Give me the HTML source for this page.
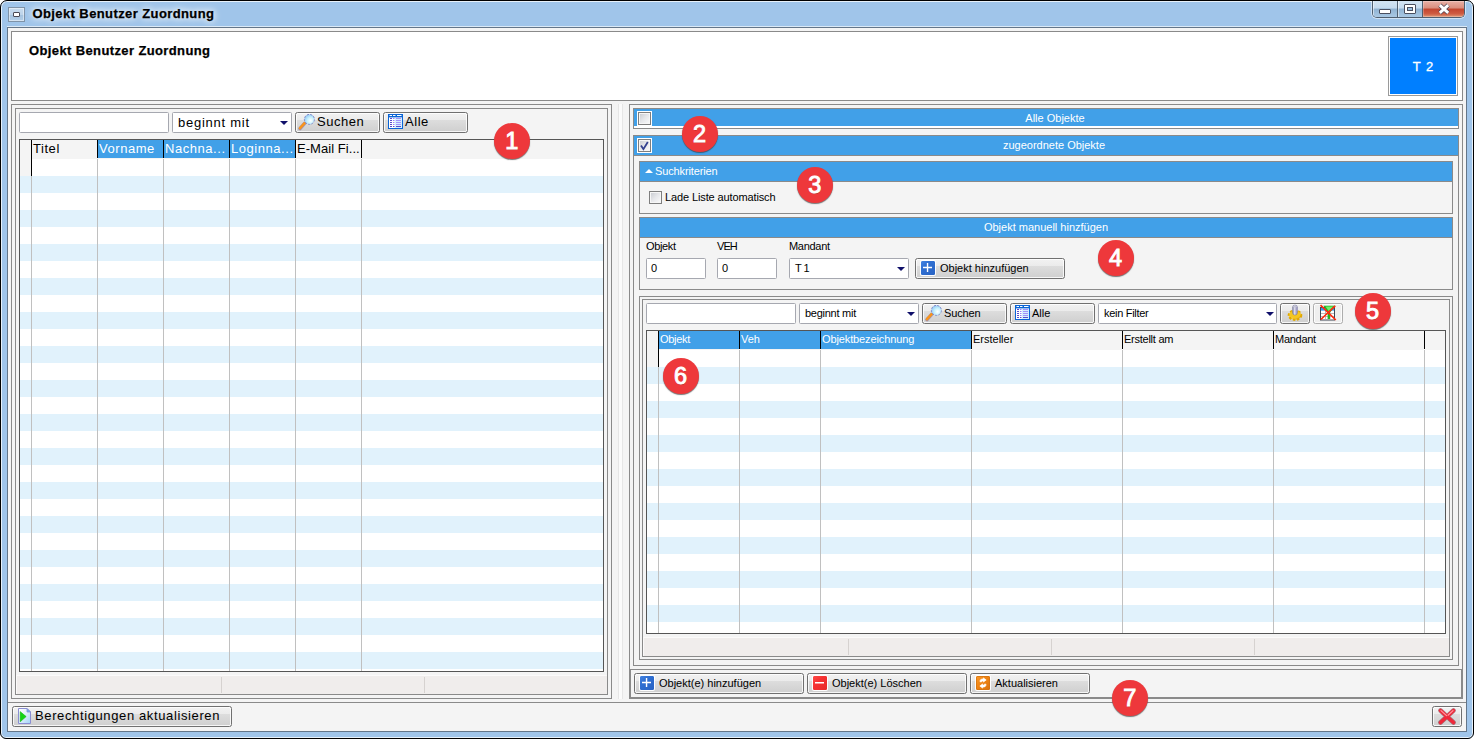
<!DOCTYPE html>
<html>
<head>
<meta charset="utf-8">
<title>Objekt Benutzer Zuordnung</title>
<style>
*{box-sizing:border-box;margin:0;padding:0}
html,body{width:1474px;height:739px;overflow:hidden;background:#fff}
body{font-family:"Liberation Sans",sans-serif;font-size:11px;color:#000;position:relative}
.a{position:absolute}
.win{left:0;top:0;width:1474px;height:739px;background:#a0c5ea;border:1px solid #000;border-radius:7px 7px 6px 6px;box-shadow:inset 0 0 0 1px rgba(255,255,255,.75)}
.client{left:7px;top:27px;width:1460px;height:705px;background:#f4f4f4;border:1px solid #647689;box-shadow:0 -1px 0 rgba(228,238,248,.85)}
.pn{border:1px solid #8a8a8a;background:#f4f4f4}
.bar{background:#41a0e8;box-shadow:0 1px 0 #8a8a8a;color:#fff;font-size:11px;line-height:19px;white-space:nowrap}
.inp{background:#fff;border:1px solid #a6a8b0;border-radius:1.5px;height:21px}
.btn{height:21px;border:1px solid #707070;border-radius:2.5px;background:linear-gradient(#f2f2f2 0,#ebebeb 37%,#dddddd 38%,#cfcfcf 100%);box-shadow:inset 0 0 0 1px rgba(255,255,255,.8);white-space:nowrap}
.arr{width:0;height:0;border-left:4px solid transparent;border-right:4px solid transparent;border-top:4px solid #10106a}
.t{white-space:nowrap;line-height:1}
.v{font-size:13px;letter-spacing:.55px}
.grid{border:1px solid #555;background:#fff;overflow:hidden}
.stripes{left:0;right:0;background:repeating-linear-gradient(#fff 0,#fff 17px,#e1f2fc 17px,#e1f2fc 34px)}
.vl{width:1px;background:#c0c0c0;top:19px;bottom:0}
.hl{width:1px;background:#000;top:0}
.hd{background:#f4f4f4;top:0}
.hb{background:#41a0e8;color:#fff;top:0}
.st{background:#f0edec;border-left:1px solid #fbfafa;border-top:1px solid #fbfafa}
.sv{width:1px;background:#d6d2d0;top:1px;bottom:1px}
.cb{width:13px;height:13px;border:1px solid #7e7e7e;background:linear-gradient(135deg,#c6c9cf 0,#e6e7ea 50%,#fbfbfb 100%);box-shadow:inset 0 0 0 1px #f6f6f6}
.cbw{box-shadow:0 0 0 1px #fff,inset 0 0 0 1px #f6f6f6}
.dot{width:36px;height:36px;border-radius:50%;background:#ee383b;color:#fff;font-weight:normal;font-size:23.5px;line-height:37px;text-align:center;-webkit-text-stroke:.95px #fff;text-shadow:0 1px 0 rgba(110,20,20,.45);box-shadow:0 1px 1px rgba(60,60,60,.7)}
.ic{width:14px;height:14px;box-shadow:0 0 0 1px rgba(255,255,255,.95);border-radius:1px}
</style>
</head>
<body>
<div class="a win"></div>
<!-- title bar -->
<div class="a" style="left:8px;top:7px;width:17px;height:15px;border:1px solid #7f93a8;background:linear-gradient(#c9dcee 0,#bdd4ea 50%,#a4c2df 51%,#b4cfe8 100%);box-shadow:inset 0 0 0 1px rgba(255,255,255,.45)"></div>
<div class="a" style="left:13px;top:12px;width:7px;height:5px;border:1px solid #4a4a55;border-radius:1px;background:#fff"></div>
<div class="a t" id="wtitle" style="left:32.500px;top:7px;font-size:13px;font-weight:bold;letter-spacing:.4px;-webkit-text-stroke:.25px #000;text-shadow:0 0 6px #fff,0 0 8px #fff">Objekt Benutzer Zuordnung</div>

<div class="a client"></div>

<!-- header panel -->
<div class="a pn" style="left:11px;top:31px;width:1452px;height:70px;background:#fff"></div>
<div class="a t" id="htitle" style="left:29px;top:44px;font-size:13px;font-weight:bold;letter-spacing:.38px;-webkit-text-stroke:.25px #000">Objekt Benutzer Zuordnung</div>
<div class="a" style="left:1388px;top:36px;width:70px;height:60px;border:1px solid #9a9a9a;background:#fff;padding:1px"><div style="width:100%;height:100%;background:#007fff;color:#fff;font-size:13px;text-align:center;line-height:57px;letter-spacing:1px;padding-left:1px;-webkit-text-stroke:.3px #fff">T 2</div></div>

<!-- left panel -->
<div class="a pn" style="left:11px;top:104px;width:601px;height:595px"></div>
<div class="a pn" style="left:15px;top:108px;width:593px;height:587px"></div>

<div class="a inp" style="left:19px;top:112px;width:150px"></div>
<div class="a inp" style="left:172px;top:112px;width:120px"></div>
<div class="a t v" id="lcombo" style="left:178px;top:116px;letter-spacing:.75px">beginnt mit</div>
<div class="a arr" style="left:280px;top:121px"></div>
<div class="a btn" style="left:295px;top:112px;width:85px"></div>
<svg class="a" style="left:298px;top:113px" width="18" height="18" viewBox="0 0 18 18"><defs><radialGradient id="lg" cx=".62" cy=".62" r=".7"><stop offset="0" stop-color="#fff"/><stop offset=".45" stop-color="#c8f2fd"/><stop offset="1" stop-color="#8cc4f4"/></radialGradient></defs><path d="M6.6 10.4 L2 15.6" stroke="#6a5aa0" stroke-width="3.4" stroke-linecap="round" opacity=".55"/><path d="M6.6 10.2 L2 15.2" stroke="#f7941d" stroke-width="2.6" stroke-linecap="round"/><circle cx="11.4" cy="6.4" r="5" fill="url(#lg)" stroke="#7f86c8" stroke-width="1" stroke-dasharray="2.2 1.2"/></svg>
<div class="a t v" id="lsuchen" style="left:317px;top:115px">Suchen</div>
<div class="a btn" style="left:383px;top:112px;width:85px"></div>
<svg class="a" style="left:388px;top:114px" width="15" height="15" viewBox="0 0 15 15"><rect x=".5" y=".5" width="14" height="14" fill="#fff" stroke="#0a64d6"/><rect x="1" y="1" width="13" height="2.400" fill="#0a64d6"/><rect x="7" y="4" width="7" height="10" fill="#d4efff"/><path d="M1.500 1.500h2.500M5 1.500h2.500M9 1.500h4.500" stroke="#fff" stroke-width="1"/><path d="M2 4.500h2M2 6.500h2M2 8.500h2M2 10.500h2M2 12.500h2" stroke="#5a4ccc" stroke-width="1"/><path d="M5 4.500h1.500M5 6.500h1.500M5 8.500h1.500M5 10.500h1.500" stroke="#9486f6" stroke-width="1"/><path d="M5 12.500h1.500" stroke="#5a4ccc" stroke-width="1"/><path d="M8 4.500h5M8 6.500h5M8 8.500h5M8 10.500h5" stroke="#a292fa" stroke-width="1"/><path d="M8 12.500h5" stroke="#5a4ccc" stroke-width="1"/></svg>
<div class="a t v" id="lalle" style="left:405px;top:115px">Alle</div>

<div class="a grid" id="lgrid" style="left:19px;top:139px;width:585px;height:533px">
 <div class="a stripes" style="top:19px;bottom:0"></div>
 <div class="a hd" style="left:0;width:583px;height:19px"></div>
 <div class="a hd" style="left:0;width:11px;height:36px"></div>
 <div class="a hb" style="left:78px;width:198px;height:18px"></div>
 <div class="a vl" style="left:11px"></div><div class="a vl" style="left:77px"></div><div class="a vl" style="left:143px"></div><div class="a vl" style="left:209px"></div><div class="a vl" style="left:275px"></div><div class="a vl" style="left:341px"></div>
 <div class="a hl" style="left:11px;height:36px"></div><div class="a hl" style="left:77px;height:18px"></div><div class="a hl" style="left:143px;height:18px"></div><div class="a hl" style="left:209px;height:18px"></div><div class="a hl" style="left:275px;height:18px"></div><div class="a hl" style="left:341px;height:18px"></div>
 <div class="a t v" style="left:13px;top:2px">Titel</div>
 <div class="a t v" style="left:79px;top:2px;color:#fff">Vorname</div>
 <div class="a t v" style="left:145px;top:2px;color:#fff">Nachna...</div>
 <div class="a t v" style="left:211px;top:2px;color:#fff">Loginna...</div>
 <div class="a t v" style="left:277px;top:2px;letter-spacing:.05px">E-Mail Fi...</div>
</div>
<div class="a st" style="left:16px;top:675px;width:591px;height:19px"><div class="a sv" style="left:204px"></div><div class="a sv" style="left:407px"></div></div>

<!-- right panel -->
<div class="a" style="left:618px;top:104px;width:5px;height:595px;background:#fbfbfb;border-left:1px solid #e6e6e6;border-right:1px solid #e6e6e6"></div>
<div class="a pn" style="left:629px;top:104px;width:834px;height:595px"></div>

<!-- Alle Objekte -->
<div class="a pn" style="left:633px;top:108px;width:826px;height:21px;background:#fff"></div>
<div class="a bar" style="left:634px;top:109px;width:824px;height:17px;line-height:19px;padding-left:18px;text-align:center;box-shadow:none">Alle Objekte</div>
<div class="a cb cbw" style="left:638px;top:112px"></div>
<!-- zugeordnete Objekte -->
<div class="a pn" style="left:633px;top:135px;width:826px;height:531px"></div>
<div class="a bar" style="left:634px;top:136px;width:824px;height:19px;padding-left:16px;text-align:center">zugeordnete Objekte</div>
<div class="a cb cbw" style="left:638px;top:139px"></div>
<svg class="a" style="left:639px;top:140px" width="11" height="11" viewBox="0 0 11 11"><path d="M2 5.6 L4.4 9.2 L8.8 2" fill="none" stroke="#33418f" stroke-width="1.8"/></svg>
<!-- Suchkriterien -->
<div class="a pn" style="left:639px;top:161px;width:814px;height:53px"></div>
<div class="a bar" style="left:640px;top:162px;width:812px;height:19px;padding-left:15px;letter-spacing:-.13px">Suchkriterien</div>
<div class="a" style="left:645px;top:169px;width:0;height:0;border-left:4px solid transparent;border-right:4px solid transparent;border-bottom:4px solid #fff"></div>
<div class="a cb" style="left:649px;top:191px"></div>
<div class="a t" style="left:665px;top:192px;letter-spacing:-.12px">Lade Liste automatisch</div>
<!-- Objekt manuell -->
<div class="a pn" style="left:639px;top:217px;width:814px;height:73px"></div>
<div class="a bar" style="left:640px;top:218px;width:812px;height:19px;text-align:center">Objekt manuell hinzfügen</div>
<div class="a t" style="left:646px;top:241px;letter-spacing:-.35px">Objekt</div>
<div class="a t" style="left:717px;top:241px;letter-spacing:-.9px">VEH</div>
<div class="a t" style="left:789px;top:241px;letter-spacing:-.3px">Mandant</div>
<div class="a inp" style="left:646px;top:258px;width:60px"></div><div class="a t" style="left:651px;top:263px">0</div>
<div class="a inp" style="left:717px;top:258px;width:60px"></div><div class="a t" style="left:722px;top:263px">0</div>
<div class="a inp" style="left:789px;top:258px;width:120px"></div><div class="a t" style="left:795px;top:263px;letter-spacing:-.5px">T 1</div>
<div class="a arr" style="left:897px;top:267px"></div>
<div class="a btn" style="left:915px;top:258px;width:150px"></div>
<svg class="a ic" style="left:921px;top:261px" viewBox="0 0 14 14"><defs><linearGradient id="pg1" x1="0" y1="0" x2="1" y2="1"><stop offset="0" stop-color="#4585e2"/><stop offset=".35" stop-color="#2f6fd2"/><stop offset="1" stop-color="#2a64c4"/></linearGradient></defs><rect width="14" height="14" rx="1" fill="url(#pg1)"/><path d="M2 6.55h9M6.55 2v9" stroke="#fff" stroke-width="1.4"/></svg>
<div class="a t" style="left:940px;top:263px">Objekt hinzufügen</div>
<!-- grid panel -->
<div class="a pn" style="left:639px;top:296px;width:814px;height:364px"></div>
<div class="a pn" style="left:642px;top:299px;width:808px;height:358px"></div>
<div class="a inp" style="left:646px;top:303px;width:150px"></div>
<div class="a inp" style="left:799px;top:303px;width:120px"></div>
<div class="a t" style="left:805px;top:308px;letter-spacing:-.26px">beginnt mit</div>
<div class="a arr" style="left:907px;top:312px"></div>
<div class="a btn" style="left:922px;top:303px;width:85px"></div>
<svg class="a" style="left:925px;top:304px" width="18" height="18" viewBox="0 0 18 18"><path d="M6.6 10.4 L2 15.6" stroke="#6a5aa0" stroke-width="3.4" stroke-linecap="round" opacity=".55"/><path d="M6.6 10.2 L2 15.2" stroke="#f7941d" stroke-width="2.6" stroke-linecap="round"/><circle cx="11.4" cy="6.4" r="5" fill="url(#lg)" stroke="#7f86c8" stroke-width="1" stroke-dasharray="2.2 1.2"/></svg>
<div class="a t" style="left:944px;top:308px;letter-spacing:-.15px">Suchen</div>
<div class="a btn" style="left:1010px;top:303px;width:85px"></div>
<svg class="a" style="left:1015px;top:305px" width="15" height="15" viewBox="0 0 15 15"><rect x=".5" y=".5" width="14" height="14" fill="#fff" stroke="#0a64d6"/><rect x="1" y="1" width="13" height="2.400" fill="#0a64d6"/><rect x="7" y="4" width="7" height="10" fill="#d4efff"/><path d="M1.500 1.500h2.500M5 1.500h2.500M9 1.500h4.500" stroke="#fff" stroke-width="1"/><path d="M2 4.500h2M2 6.500h2M2 8.500h2M2 10.500h2M2 12.500h2" stroke="#5a4ccc" stroke-width="1"/><path d="M5 4.500h1.500M5 6.500h1.500M5 8.500h1.500M5 10.500h1.500" stroke="#9486f6" stroke-width="1"/><path d="M5 12.500h1.500" stroke="#5a4ccc" stroke-width="1"/><path d="M8 4.500h5M8 6.500h5M8 8.500h5M8 10.500h5" stroke="#a292fa" stroke-width="1"/><path d="M8 12.500h5" stroke="#5a4ccc" stroke-width="1"/></svg>
<div class="a t" style="left:1032px;top:308px">Alle</div>
<div class="a inp" style="left:1098px;top:303px;width:179px"></div>
<div class="a t" style="left:1104px;top:308px;letter-spacing:-.3px">kein Filter</div>
<div class="a arr" style="left:1266px;top:312px"></div>
<div class="a btn" style="left:1280px;top:303px;width:30px"></div>
<div class="a btn" style="left:1313px;top:303px;width:30px;border-color:#adadad;background:#efefef"></div>
<svg class="a" style="left:1287px;top:304px" width="16" height="18" viewBox="0 0 16 18"><defs><linearGradient id="gg" x1="0" y1="0" x2="1" y2="1"><stop offset="0" stop-color="#f2c21a"/><stop offset=".5" stop-color="#ffd83c"/><stop offset="1" stop-color="#d89c00"/></linearGradient><linearGradient id="cy" x1="0" y1="0" x2="1" y2="0"><stop offset="0" stop-color="#7e7e9e"/><stop offset=".4" stop-color="#dcdcec"/><stop offset="1" stop-color="#8a88b8"/></linearGradient></defs><ellipse cx="8" cy="11.2" rx="6.2" ry="4.6" fill="url(#gg)" stroke="#e0a800" stroke-width="2.2" stroke-dasharray="2.4 1.6"/><ellipse cx="8" cy="10.4" rx="5.6" ry="3.6" fill="#f4c622"/><rect x="5.6" y="1" width="4.8" height="10" rx="2.2" fill="url(#cy)" stroke="#76769a" stroke-width=".5"/><ellipse cx="8" cy="2.4" rx="2" ry="1" fill="#c4c4d4"/></svg>
<svg class="a" style="left:1319px;top:304px" width="18" height="18" viewBox="0 0 18 18"><rect x="1.5" y="3.5" width="14" height="12.5" fill="#fff" stroke="#3e4654"/><rect x="2" y="4" width="13" height="2.6" fill="#2a9af4"/><path d="M2 9.5h13M2 12.5h13M6.5 7v9M11 7v9" stroke="#a8a8a8" stroke-width=".8"/><path d="M4.5 1.8 L16.5 1.8 L11 8.5 L11 15 L8.6 15 L8.6 8.5 Z" fill="#22b422"/><path d="M6.5 2.6 L14.5 2.6 L10 7.6 Z" fill="#6cf06c"/><path d="M1.5 1.2 L16.8 16 M16.2 1.8 L1.8 15.5" stroke="#ff2a10" stroke-width="1.7"/></svg>

<div class="a grid" id="rgrid" style="left:646px;top:330px;width:800px;height:304px">
 <div class="a stripes" style="top:19px;bottom:0"></div>
 <div class="a hd" style="left:0;width:798px;height:19px"></div>
 <div class="a hd" style="left:0;width:11px;height:36px"></div>
 <div class="a hb" style="left:12px;width:313px;height:18px"></div>
 <div class="a vl" style="left:11px"></div><div class="a vl" style="left:92px"></div><div class="a vl" style="left:173px"></div><div class="a vl" style="left:324px"></div><div class="a vl" style="left:475px"></div><div class="a vl" style="left:626px"></div><div class="a vl" style="left:777px"></div>
 <div class="a hl" style="left:11px;height:36px"></div><div class="a hl" style="left:92px;height:18px"></div><div class="a hl" style="left:173px;height:18px"></div><div class="a hl" style="left:324px;height:18px"></div><div class="a hl" style="left:475px;height:18px"></div><div class="a hl" style="left:626px;height:18px"></div><div class="a hl" style="left:777px;height:18px"></div>
 <div class="a t" style="left:13px;top:3px;color:#fff;letter-spacing:-.3px">Objekt</div>
 <div class="a t" style="left:94px;top:3px;color:#fff">Veh</div>
 <div class="a t" style="left:175px;top:3px;color:#fff;letter-spacing:-.12px">Objektbezeichnung</div>
 <div class="a t" style="left:326px;top:3px">Ersteller</div>
 <div class="a t" style="left:477px;top:3px;letter-spacing:-.25px">Erstellt am</div>
 <div class="a t" style="left:628px;top:3px;letter-spacing:-.28px">Mandant</div>
</div>
<div class="a st" style="left:643px;top:637px;width:806px;height:19px"><div class="a sv" style="left:204px"></div><div class="a sv" style="left:407px"></div><div class="a sv" style="left:610px"></div></div>

<!-- button strip -->
<div class="a pn" style="left:630px;top:669px;width:832px;height:29px"></div>
<div class="a btn" style="left:634px;top:673px;width:170px"></div>
<svg class="a ic" style="left:640px;top:676px" viewBox="0 0 14 14"><defs><linearGradient id="pg2" x1="0" y1="0" x2="1" y2="1"><stop offset="0" stop-color="#4585e2"/><stop offset=".35" stop-color="#2f6fd2"/><stop offset="1" stop-color="#2a64c4"/></linearGradient></defs><rect width="14" height="14" rx="1" fill="url(#pg2)"/><path d="M2 6.55h9M6.55 2v9" stroke="#fff" stroke-width="1.4"/></svg>
<div class="a t" style="left:659px;top:678px">Objekt(e) hinzufügen</div>
<div class="a btn" style="left:807px;top:673px;width:160px"></div>
<svg class="a ic" style="left:813px;top:676px" viewBox="0 0 14 14"><defs><linearGradient id="mg" x1="0" y1="0" x2="1" y2="1"><stop offset="0" stop-color="#ff4a48"/><stop offset=".4" stop-color="#f63232"/><stop offset="1" stop-color="#e62a2a"/></linearGradient></defs><rect width="14" height="14" rx="1" fill="url(#mg)"/><path d="M2 6.8h9" stroke="#fff" stroke-width="1.6"/></svg>
<div class="a t" style="left:832px;top:678px">Objekt(e) Löschen</div>
<div class="a btn" style="left:970px;top:673px;width:120px"></div>
<svg class="a ic" style="left:976px;top:676px" viewBox="0 0 14 14"><defs><linearGradient id="rg" x1="0" y1="0" x2="1" y2="1"><stop offset="0" stop-color="#fb9a2a"/><stop offset=".5" stop-color="#ee8212"/><stop offset="1" stop-color="#d8700c"/></linearGradient></defs><rect width="14" height="14" rx="1.2" fill="url(#rg)"/><rect x=".5" y=".5" width="13" height="13" rx="1" fill="none" stroke="#d2700e" stroke-width="1" opacity=".7"/><path d="M4 5.800 C3.900 3.500 5.200 2.900 7.400 3 L7.400 1.900 L10.200 4 L7.400 6.100 L7.400 4.900 C6.200 4.800 5.700 5.100 5.700 5.800 Z" fill="#fff" stroke="#fff" stroke-width=".7" stroke-linejoin="round"/><path d="M4 5.800 C3.900 3.500 5.200 2.900 7.400 3 L7.400 1.900 L10.200 4 L7.400 6.100 L7.400 4.900 C6.200 4.800 5.700 5.100 5.700 5.800 Z" fill="#fff" stroke="#fff" stroke-width=".7" stroke-linejoin="round" transform="rotate(180 7 7)"/></svg>
<div class="a t" style="left:995px;top:678px">Aktualisieren</div>

<!-- bottom bar -->
<div class="a" style="left:8px;top:702px;width:1458px;height:1px;background:#8a8a8a"></div>

<div class="a btn" style="left:12px;top:706px;width:220px"></div>
<svg class="a" style="left:18px;top:708px" width="13" height="16" viewBox="0 0 13 16"><defs><linearGradient id="pgd" x1="0" y1="0" x2="1" y2="1"><stop offset="0" stop-color="#fff"/><stop offset=".45" stop-color="#e4f0fb"/><stop offset="1" stop-color="#9fd4f8"/></linearGradient></defs><path d="M.5 .5h8.5l3.500 3.500v11.500h-12z" fill="url(#pgd)" stroke="#8a8ed2"/><path d="M9 .5v3.500h3.500z" fill="#6ab4f4" stroke="#8a8ed2" stroke-width=".8"/><path d="M2.200 3.600l6 5-6 5.200z" fill="#14d414"/><path d="M2.200 3.600l6 5-6 5.200z" fill="none" stroke="#0fae0f" stroke-width=".5"/></svg>
<div class="a t v" id="lber" style="left:35px;top:709px;letter-spacing:.62px">Berechtigungen aktualisieren</div>
<div class="a btn" style="left:1432px;top:706px;width:30px"></div>
<svg class="a" style="left:1438px;top:708px" width="18" height="17" viewBox="0 0 18 17"><path d="M2.5 2.5 L15.5 14.5 M15.5 2.5 L2.5 14.5" stroke="#7a2030" stroke-width="4.6" stroke-linecap="round" opacity=".55"/><path d="M2.5 2.5 L15.5 14.5 M15.5 2.5 L2.5 14.5" stroke="#f0283a" stroke-width="3.4" stroke-linecap="round"/><path d="M3 2.6 L8.5 7.6 M15 2.6 L10 7.2" stroke="#ff9aa0" stroke-width="1.2" stroke-linecap="round"/></svg>

<!-- window controls -->
<div class="a" style="left:1371px;top:1px;width:95px;height:18px;border-radius:0 0 6px 6px;background:rgba(255,255,255,.5)"></div>
<div class="a" style="left:1372px;top:1px;width:93px;height:17px;border:1px solid #4f5f70;border-top:none;border-radius:0 0 5px 5px;overflow:hidden">
 <div class="a" style="left:0;top:0;width:25px;height:16px;background:linear-gradient(#d3e4f3 0,#c4daee 46%,#8fb2d2 48%,#a9c8e4 100%);border-right:1px solid #4f5f70;box-shadow:inset 1px 0 0 rgba(255,255,255,.5)"></div>
 <div class="a" style="left:25px;top:0;width:25px;height:16px;background:linear-gradient(#d3e4f3 0,#c4daee 46%,#8fb2d2 48%,#a9c8e4 100%);border-right:1px solid #4f5f70;box-shadow:inset 1px 0 0 rgba(255,255,255,.5)"></div>
 <div class="a" style="left:50px;top:0;width:42px;height:16px;background:linear-gradient(#e9b0a6 0,#d98c7c 46%,#c2432e 48%,#cf5c42 80%,#e09a78 100%);box-shadow:inset 0 0 0 1px rgba(255,255,255,.25)"></div>
</div>
<div class="a" style="left:1379px;top:9px;width:12px;height:5px;background:#fff;border:1px solid #4a4f60;border-radius:1px"></div>
<div class="a" style="left:1404px;top:4px;width:12px;height:10px;background:#fff;border:1px solid #4a4f60;border-radius:1px"></div>
<div class="a" style="left:1407px;top:7px;width:6px;height:4px;background:#9cc0e0;border:1px solid #4a4f60"></div>
<svg class="a" style="left:1437px;top:3px" width="14" height="12" viewBox="0 0 14 12"><path d="M2.800 2.200 L11.200 9.800 M11.200 2.200 L2.800 9.800" stroke="#4a4050" stroke-width="4.400"/><path d="M2.800 2.200 L11.200 9.800 M11.200 2.200 L2.800 9.800" stroke="#fff" stroke-width="2.900"/></svg>

<!-- markers -->
<div class="a dot" style="left:493.8px;top:123px">1</div>
<div class="a dot" style="left:681.6px;top:116px">2</div>
<div class="a dot" style="left:796.8px;top:167px">3</div>
<div class="a dot" style="left:1097.6px;top:240.2px">4</div>
<div class="a dot" style="left:1354.6px;top:293px">5</div>
<div class="a dot" style="left:662.6px;top:358px">6</div>
<div class="a dot" style="left:1111.8px;top:680px">7</div>

</body>
</html>
